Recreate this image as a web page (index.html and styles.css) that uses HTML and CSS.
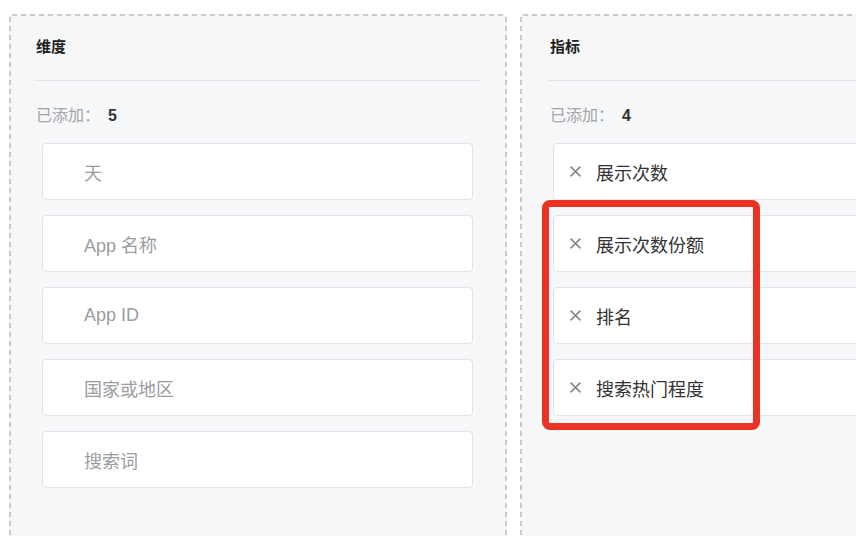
FILE: index.html
```html
<!DOCTYPE html>
<html lang="zh-CN">
<head>
  <meta charset="UTF-8" />
  <meta name="viewport" content="width=device-width, initial-scale=1.0"/>
  <title>维度与指标</title>
  <link rel="stylesheet" href="styles.css">
</head>
<body>

  <div class="board">
    <div class="panel">
      <div class="panel-head">维度</div>
      <div class="count">已添加：<b>5</b></div>
      <div class="items">
        <div class="item muted">天</div>
        <div class="item muted">App 名称</div>
        <div class="item muted">App ID</div>
        <div class="item muted">国家或地区</div>
        <div class="item muted">搜索词</div>
      </div>
    </div>

    <div class="panel panel-metrics">
      <div class="panel-head">指标</div>
      <div class="count">已添加：<b>4</b></div>
      <div class="items">
        <div class="item"><svg class="remove" viewBox="0 0 12 12"><path d="M1.5 1.5l9 9M10.5 1.5l-9 9"/></svg>展示次数</div>
        <div class="item"><svg class="remove" viewBox="0 0 12 12"><path d="M1.5 1.5l9 9M10.5 1.5l-9 9"/></svg>展示次数份额</div>
        <div class="item"><svg class="remove" viewBox="0 0 12 12"><path d="M1.5 1.5l9 9M10.5 1.5l-9 9"/></svg>排名</div>
        <div class="item"><svg class="remove" viewBox="0 0 12 12"><path d="M1.5 1.5l9 9M10.5 1.5l-9 9"/></svg>搜索热门程度</div>
      </div>
      <div class="highlight"></div>
    </div>
  </div>

</body>
</html>
```

FILE: styles.css
```css
body {
  margin: 0;
  font-family: 'Liberation Sans', 'Noto Sans CJK SC', sans-serif;
  background-color: #fff;
  color: #333;
  overflow: hidden;
}

.board {
  display: flex;
  gap: 13px;
  padding: 14px 0 0 9px;
  height: 600px;
}

/* dashed frame drawn with gradients so the dash length matches */
.panel {
  flex: 0 0 498px;
  box-sizing: border-box;
  height: 560px;
  background-color: #f6f7f9;
  background-image:
    repeating-linear-gradient(90deg, #c9cbcf 0 5px, transparent 5px 9px),
    repeating-linear-gradient(180deg, #c9cbcf 0 5px, transparent 5px 9px),
    repeating-linear-gradient(180deg, #c9cbcf 0 5px, transparent 5px 9px);
  background-size: 100% 2px, 2px 100%, 2px 100%;
  background-position: 3px 0, 0 3px, 100% 3px;
  background-repeat: no-repeat;
  border-radius: 4px;
  padding: 0 26px 0 25px;
}

.panel-metrics {
  position: relative;
  padding-left: 28px;
}

.panel-head {
  height: 67px;
  box-sizing: border-box;
  padding: 23px 0 0 2px;
  font-size: 15px;
  line-height: 20px;
  font-weight: bold;
  color: #222;
  border-bottom: 1px solid #e3e5e8;
}

.count {
  margin-top: 25px;
  padding-left: 2px;
  font-size: 16px;
  line-height: 20px;
  color: #a3a5a8;
}

.count b {
  margin-left: 8px;
  color: #333;
}

.items {
  display: flex;
  flex-direction: column;
  gap: 15px;
  margin: 17px 8px 0 8px;
}

.panel-metrics .items {
  margin-left: 5px;
  margin-right: -60px;
}

.item {
  display: flex;
  align-items: center;
  height: 57px;
  box-sizing: border-box;
  background-color: #fff;
  border: 1px solid #e2e4e7;
  border-radius: 4px;
  padding-left: 15px;
  font-size: 18px;
  color: #333;
}

.item.muted {
  padding-left: 41px;
  color: #9a9c9f;
}

.remove {
  width: 13px;
  height: 13px;
  margin-right: 14px;
  fill: none;
  stroke: #8a8c8f;
  stroke-width: 1.7;
}

.highlight {
  position: absolute;
  left: 22px;
  top: 186px;
  width: 218px;
  height: 230px;
  box-sizing: border-box;
  border: 7px solid #ea3323;
  border-radius: 8px;
}
```
